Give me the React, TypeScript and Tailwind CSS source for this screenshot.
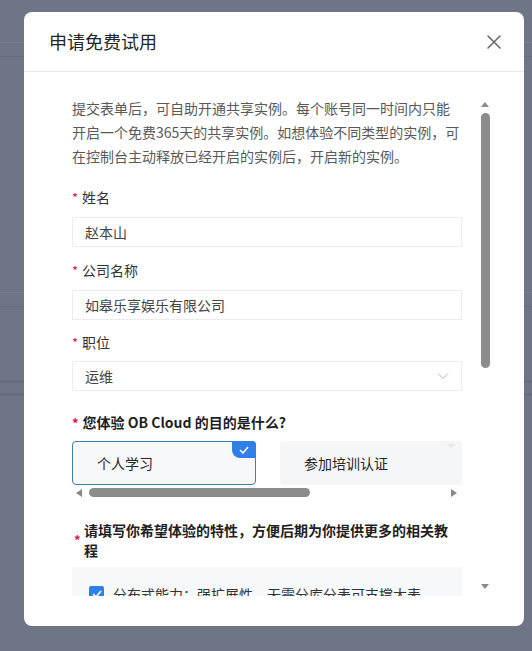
import React from "react";

const font = { fontFamily: '"Noto Sans CJK SC", "Noto Sans", sans-serif' };

function Req() {
  return <span className="text-[#d4145a] mr-[4px] text-[13px]">*</span>;
}

export default function App() {
  return (
    <div className="relative w-[532px] h-[651px] bg-[#6e7586] overflow-hidden" style={font}>
      {/* background page lines */}
      <div className="flex flex-col">
        <div className="h-[43px] border-b border-[#777e8d]" />
        <div className="h-[14px] border-b border-[#666d7c]" />
        <div className="h-[236px] border-b border-[#777e8d]" />
        <div className="h-[14px] border-b border-[#666d7c]" />
        <div className="h-[75px] border-b border-[#5f6675]" />
        <div className="h-[13px] border-b border-[#5f6675]" />
      </div>

      {/* modal */}
      <div className="absolute left-[24px] top-[12px] w-[500px] h-[614px] bg-white rounded-[8px] flex flex-col">
        <div className="h-[60px] shrink-0 flex items-center justify-between pl-[25px] pr-[22px] border-b border-[#e8e8e8]">
          <span className="text-[18px] text-[#262626]">申请免费试用</span>
          <svg width="16" height="16" viewBox="0 0 16 16" className="text-[#666]">
            <path d="M2 2 L14 14 M14 2 L2 14" stroke="currentColor" strokeWidth="1.5" strokeLinecap="round" />
          </svg>
        </div>

        <div className="flex mt-[24px] h-[500px] pl-[48px]">
          <div className="w-[390px] h-[500px] overflow-hidden">
            <p className="text-[14px] leading-[24px] text-[#595959]">
              提交表单后，可自助开通共享实例。每个账号同一时间内只能开启一个免费365天的共享实例。如想体验不同类型的实例，可在控制台主动释放已经开启的实例后，开启新的实例。
            </p>

            <div className="mt-[18px] text-[14px] leading-[22px] text-[#333]"><Req />姓名</div>
            <div className="mt-[8px] h-[30px] border border-[#ececec] flex items-center px-[12px] text-[14px] text-[#444]">赵本山</div>

            <div className="mt-[12px] text-[14px] leading-[22px] text-[#333]"><Req />公司名称</div>
            <div className="mt-[8px] h-[30px] border border-[#ececec] flex items-center px-[12px] text-[14px] text-[#444]">如皋乐享娱乐有限公司</div>

            <div className="mt-[11px] text-[14px] leading-[22px] text-[#333]"><Req />职位</div>
            <div className="mt-[7px] h-[30px] border border-[#ececec] flex items-center justify-between px-[12px] text-[14px] text-[#444]">
              <span>运维</span>
              <svg width="12" height="8" viewBox="0 0 12 8">
                <path d="M1 1.5 L6 6.5 L11 1.5" fill="none" stroke="#b5b5b5" strokeWidth="1" />
              </svg>
            </div>

            <div className="mt-[20px] text-[14px] leading-[22px] text-[#1f1f1f] font-bold"><Req />您体验 OB Cloud 的目的是什么?</div>
            <div className="mt-[7px] flex gap-[24px] w-[390px] overflow-hidden">
              <div className="relative shrink-0 w-[184px] h-[44px] rounded-[4px] border border-[#3f7fa6] bg-[#f7f8fa] flex items-center pl-[24px] text-[14px] text-[#262626]">
                个人学习
                <div className="absolute -top-[1px] -right-[1px] w-[24px] h-[17px] bg-[#2f7fe6] rounded-tr-[4px] rounded-bl-[8px] flex items-center justify-center">
                  <svg width="10" height="8" viewBox="0 0 10 8">
                    <path d="M1 4 L4 7 L9 1" fill="none" stroke="white" strokeWidth="1.5" />
                  </svg>
                </div>
              </div>
              <div className="relative shrink-0 w-[184px] h-[44px] rounded-[4px] bg-[#f5f6f8] flex items-center pl-[24px] text-[14px] text-[#262626]">
                参加培训认证
                <div className="absolute top-[2px] right-[8px] w-[10px] h-[6px]">
                  <svg width="10" height="6" viewBox="0 0 10 6"><path d="M1 1 L5 5 L9 1" fill="#e6e7ea" /></svg>
                </div>
              </div>
            </div>
            {/* horizontal scrollbar */}
            <div className="h-[15px] flex items-center">
              <svg width="16" height="14" viewBox="0 0 16 14"><path d="M10 3 L4 7 L10 11 Z" fill="#8a8a8a" /></svg>
              <div className="h-[9px] w-[221px] rounded-full bg-[#8c8c8c] ml-[1px]" />
              <div className="flex-1" />
              <svg width="14" height="14" viewBox="0 0 14 14"><path d="M3 3 L9 7 L3 11 Z" fill="#8a8a8a" /></svg>
            </div>

            <div className="mt-[20px] flex items-center text-[14px] leading-[20px] text-[#1f1f1f] font-bold">
              <span className="text-[#d4145a] text-[13px] mr-[2px] self-center w-[10px] pl-[2px]">*</span>
              <span className="w-[376px]">请填写你希望体验的特性，方便后期为你提供更多的相关教程</span>
            </div>
            <div className="mt-[7px] bg-[#f7f8fa] pt-[16px] pl-[17px] h-[60px] flex items-start">
              <div className="w-[15px] h-[15px] rounded-[2px] bg-[#2f7fe6] flex items-center justify-center mt-[3px] shrink-0">
                <svg width="10" height="8" viewBox="0 0 10 8"><path d="M1 4 L4 7 L9 1" fill="none" stroke="white" strokeWidth="1.6" /></svg>
              </div>
              <span className="ml-[9px] text-[14px] leading-[22px] text-[#333]">分布式能力：强扩展性，无需分库分表可支撑大表</span>
            </div>
          </div>

          {/* vertical scrollbar */}
          <div className="ml-[16px] w-[14px] h-[500px] flex flex-col items-center">
            <svg width="12" height="12" viewBox="0 0 12 12" className="shrink-0 mt-[2px]"><path d="M2 9 L6 4 L10 9 Z" fill="#8a8a8a" /></svg>
            <div className="w-[9px] h-[255px] rounded-full bg-[#8c8c8c] mt-[3px]" />
            <div className="flex-1" />
            <svg width="12" height="12" viewBox="0 0 12 12" className="shrink-0 mb-[3px]"><path d="M2 3 L10 3 L6 8 Z" fill="#8a8a8a" /></svg>
          </div>
        </div>
      </div>
    </div>
  );
}
